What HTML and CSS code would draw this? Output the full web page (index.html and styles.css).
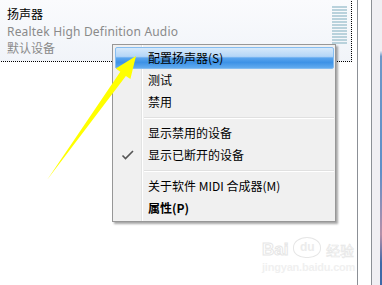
FILE: index.html
```html
<!DOCTYPE html>
<html lang="zh-CN">
<head>
<meta charset="UTF-8">
<title>扬声器</title>
<link rel="stylesheet" href="styles.css">
</head>
<body>

<div class="page">
	<div class="main">
		<div class="device">
			<div class="info">
				<p class="name">扬声器</p>
				<p class="sub latin">Realtek High Definition Audio</p>
				<p class="sub">默认设备</p>
			</div>
			<ul class="meter">
				<li></li><li></li><li></li><li></li><li></li><li></li><li></li>
				<li></li><li></li><li></li><li></li><li></li><li></li>
			</ul>
		</div>
	</div>
	<div class="pane"></div>
	<div class="edge"></div>
</div>

<div class="menu">
	<ul>
		<li class="on">配置扬声器(S)</li>
		<li>测试</li>
		<li>禁用</li>
		<li class="sep"></li>
		<li>显示禁用的设备</li>
		<li class="checked">
			<svg class="tick" width="14" height="12" viewBox="0 0 14 12"><path d="M1.5 6.5 L4.5 9.5 L12 2" fill="none" stroke="#555" stroke-width="1.6"/></svg>
			显示已断开的设备
		</li>
		<li class="sep"></li>
		<li>关于软件 MIDI 合成器(M)</li>
		<li class="bold">属性(P)</li>
	</ul>
</div>

<svg class="arrow" width="382" height="285" viewBox="0 0 382 285">
	<polygon points="47,180 120.3,71.7 115.8,68.5 136,56 130.4,79.1 125.9,75.9" fill="#ffff00"/>
</svg>

<div class="mark">
	<div class="mark-top">
		<span class="bai">Bai</span>
		<span class="paw">du</span>
		<span class="jy">经验</span>
	</div>
	<div class="mark-url">jingyan.baidu.com</div>
</div>

</body>
</html>
```

FILE: styles.css
```css
* {
	margin: 0;
	padding: 0;
}
li {
	list-style: none;
}
html, body {
	width: 382px;
	height: 285px;
	overflow: hidden;
	background: #fff;
}
body {
	position: relative;
	font: 12px/17px "Noto Sans", "Noto Sans CJK SC", sans-serif;
	color: #000;
}
.page {
	display: flex;
	height: 285px;
}
.main {
	width: 357px;
}
.device {
	display: flex;
	justify-content: space-between;
	box-sizing: border-box;
	width: 353px;
	height: 63px;
	margin: -1px 0 0 -1px;
	border: 1px dotted #000;
	background: linear-gradient(#fafbfd, #f1f4f9);
}
.info {
	padding: 6px 0 0 7px;
}
.sub {
	color: #8a8a8a;
}
.latin {
	letter-spacing: 0.18px;
}
.meter {
	display: flex;
	flex-direction: column;
	gap: 1px;
	width: 15px;
	padding: 6px 4px 0 0;
}
.meter li {
	height: 2px;
	background: #b9d2dc;
}
.pane {
	width: 13px;
	border-left: 1px solid #8c9096;
	border-right: 1px solid #8c9096;
	background: #fff;
}
.edge {
	flex: 1;
	background: #f0eff3;
	border-right: 2px solid transparent;
	border-image: linear-gradient(#f0eff3 18%, #6e98c8 20%, #5f8fc8 60%, #b58fa8 82%, #3e69a8 92%) 1;
}

.menu {
	position: absolute;
	left: 112px;
	top: 44px;
	width: 221px;
	padding: 2px 0 2px 1px;
	border: 1px solid #979797;
	background: #f0f0f0 linear-gradient(to right, transparent 28px, #e2e3e3 28px, #e2e3e3 29px, #fff 29px, #fff 30px, transparent 30px);
	box-shadow: 2px 2px 2px rgba(0, 0, 0, 0.35);
}
.menu li {
	position: relative;
	box-sizing: border-box;
	height: 22px;
	margin: 0 1px;
	padding-left: 33px;
	line-height: 22px;
	white-space: nowrap;
	font-family: "Noto Sans CJK SC", "Noto Sans", sans-serif;
}
.menu li.on {
	border: 1px solid #86bdf0;
	border-radius: 2px;
	padding-left: 32px;
	line-height: 20px;
	background: linear-gradient(#d6e9fb, #b4d6f7 42%, #5aa5ee 50%, #3d92e6 72%, #62abef);
}
.menu li.sep {
	height: 9px;
	margin-left: 30px;
	background: linear-gradient(transparent 4px, #e0e0e0 4px, #e0e0e0 5px, #fff 5px, #fff 6px, transparent 6px);
}
.menu li.bold {
	font-weight: bold;
}
.tick {
	position: absolute;
	left: 6px;
	top: 5px;
}

.arrow {
	position: absolute;
	left: 0;
	top: 0;
	pointer-events: none;
}

.mark {
	position: absolute;
	left: 262px;
	top: 231px;
	width: 92px;
	color: #fff;
	text-align: center;
}
.mark-top {
	display: flex;
	align-items: flex-end;
	justify-content: space-between;
	height: 27px;
}
.bai {
	font: bold 17px/17px "Liberation Sans", sans-serif;
	-webkit-text-stroke: 1px #e6e6e6;
}
.paw {
	width: 26px;
	height: 19px;
	border: 1px solid #e6e6e6;
	border-radius: 50% 50% 45% 45%;
	font: bold 12px/18px "Liberation Sans", sans-serif;
	color: #ececec;
}
.jy {
	font: 14px/16px "Noto Sans CJK SC", sans-serif;
	-webkit-text-stroke: 0.6px #e6e6e6;
}
.mark-url {
	margin-top: 3px;
	font: bold 11px/12px "Liberation Sans", sans-serif;
	color: #f0f0f0;
	letter-spacing: -0.2px;
}
```
